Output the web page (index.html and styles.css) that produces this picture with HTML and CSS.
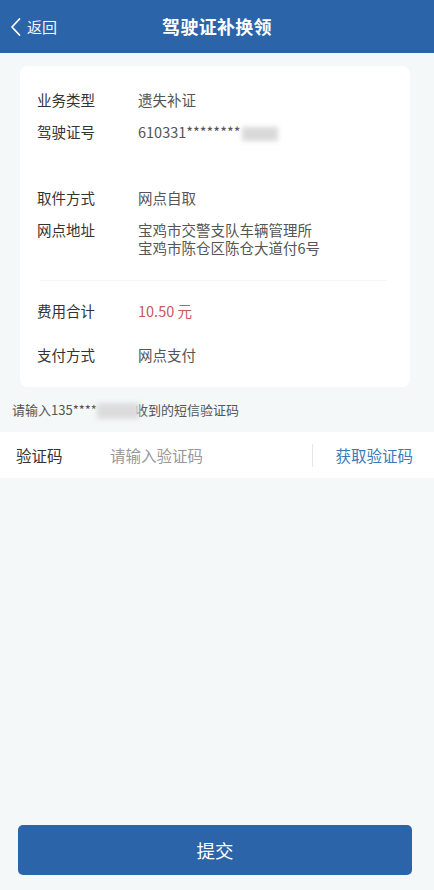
FILE: index.html
```html
<!DOCTYPE html>
<html lang="zh-CN">
<head>
<meta charset="utf-8">
<link rel="stylesheet" href="styles.css">
</head>
<body>
<header class="topbar">
  <div class="back">
    <svg class="chev" width="12" height="20" viewBox="0 0 12 20"><polyline points="9.5,2 2,10 9.5,18" fill="none" stroke="#fff" stroke-width="1.8" stroke-linecap="round" stroke-linejoin="round"/></svg>
    <span>返回</span>
  </div>
  <div class="title">驾驶证补换领</div>
</header>
<main class="page">
  <section class="card">
    <div class="row r1"><span class="label">业务类型</span><span class="value">遗失补证</span></div>
    <div class="row r2"><span class="label">驾驶证号</span><span class="value">610331********<span class="blur b1"></span></span></div>
    <div class="row r3"><span class="label">取件方式</span><span class="value">网点自取</span></div>
    <div class="row r4"><span class="label">网点地址</span><span class="value">宝鸡市交警支队车辆管理所<br>宝鸡市陈仓区陈仓大道付6号</span></div>
    <div class="divider"></div>
    <div class="row r5"><span class="label">费用合计</span><span class="value price">10.50 元</span></div>
    <div class="row r6"><span class="label">支付方式</span><span class="value">网点支付</span></div>
  </section>
  <p class="hint">请输入135****<span class="blur b2"></span>收到的短信验证码</p>
  <div class="inputrow">
    <span class="ilabel">验证码</span>
    <span class="placeholder">请输入验证码</span>
    <span class="vline"></span>
    <span class="getcode">获取验证码</span>
  </div>
  <div class="spacer"></div>
  <div class="btnwrap"><button class="submit">提交</button></div>
</main>
</body>
</html>
```
FILE: styles.css
```css
* { box-sizing: border-box; }
html, body { margin: 0; padding: 0; }
body {
  width: 434px;
  height: 890px;
  background: #f4f8f9;
  font-family: "Noto Sans CJK SC", "Noto Sans", sans-serif;
  display: flex;
  flex-direction: column;
  overflow: hidden;
}
.topbar {
  height: 53px;
  background: #2c64a9;
  display: flex;
  align-items: center;
  justify-content: center;
  position: relative;
  color: #fff;
  flex-shrink: 0;
}
.back {
  position: absolute;
  left: 10px;
  top: 0;
  height: 53px;
  display: flex;
  align-items: center;
  gap: 5px;
  font-size: 15px;
  color: #f2f6fb;
}
.chev { display: block; }
.title {
  font-size: 18px;
  font-weight: bold;
  letter-spacing: 0.3px;
  margin-top: -2px;
}
.page {
  flex: 1;
  display: flex;
  flex-direction: column;
}
.card {
  margin: 13px 24px 0 20px;
  background: #fff;
  border-radius: 8px;
  padding: 24px 23px 22px 17px;
}
.row {
  display: flex;
  font-size: 14.5px;
  line-height: 20px;
}
.label { width: 101px; color: #333; flex-shrink: 0; }
.value { color: #555; }
.r2 { margin-top: 12px; }
.r3 { margin-top: 46px; }
.r4 { margin-top: 13px; line-height: 18px; }
.r5 { margin-top: 20px; }
.r6 { margin-top: 24px; }
.price { color: #c65a5f; }
.divider {
  height: 1px;
  background: #f5f6f7;
  margin: 23px 0 0 3px;
}
.blur {
  display: inline-block;
  background: #d9d9d9;
  filter: blur(2.5px);
  vertical-align: middle;
}
.b1 { width: 36px; height: 14px; margin-left: 2px; }
.b2 { width: 42px; height: 16px; margin-right: -4px; position: relative; z-index: 1; background: #dcdcdc; }
.hint {
  margin: 14px 0 0 12px;
  font-size: 13px;
  line-height: 18px;
  color: #555;
}
.inputrow {
  margin-top: 13px;
  height: 46px;
  background: #fff;
  display: flex;
  align-items: center;
  font-size: 15.5px;
}
.ilabel { color: #333; margin-left: 16px; width: 94px; }
.placeholder { color: #999; flex: 1; }
.vline { width: 1px; height: 23px; background: #e4e6e8; margin-right: 22px; }
.getcode { color: #3b7ab8; margin-right: 21px; }
.spacer { flex: 1; }
.btnwrap { padding: 0 22px 15px 18px; }
.submit {
  width: 100%;
  height: 50px;
  background: #2c64a9;
  border: none;
  border-radius: 5px;
  color: #fff;
  font-family: "Noto Sans CJK SC", "Noto Sans", sans-serif;
  font-size: 18.5px;
  padding: 0;
}
```
